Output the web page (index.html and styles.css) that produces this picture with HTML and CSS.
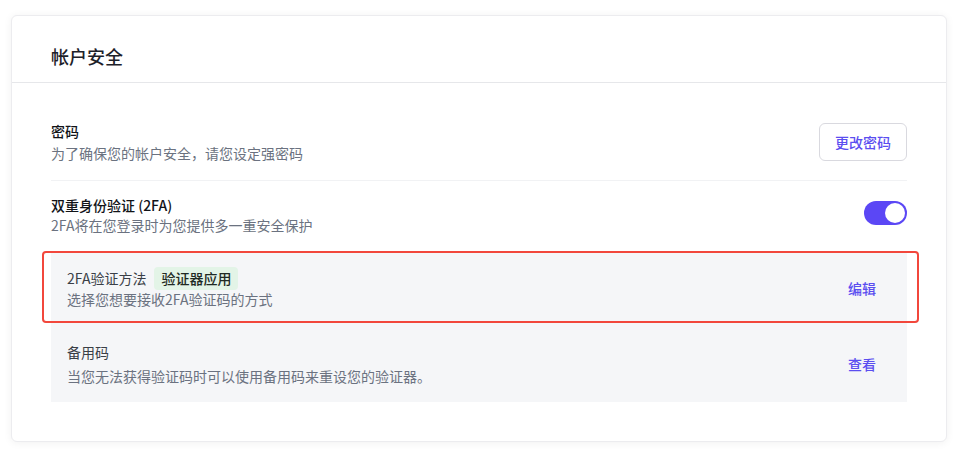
FILE: index.html
```html
<!DOCTYPE html>
<html lang="zh-CN">
<head>
<meta charset="utf-8">
<title>帐户安全</title>
<link rel="stylesheet" href="styles.css">
</head>
<body>
<div class="page">
  <section class="card">
    <header class="card-header">
      <h1 class="card-title">帐户安全</h1>
    </header>
    <div class="card-body">
      <div class="setting setting-first">
        <div class="setting-text">
          <div class="setting-label">密码</div>
          <div class="setting-desc setting-desc-spaced">为了确保您的帐户安全，请您设定强密码</div>
        </div>
        <button class="btn-outline" type="button">更改密码</button>
      </div>
      <div class="setting setting-second">
        <div class="setting-text">
          <div class="setting-label">双重身份验证 (2FA)</div>
          <div class="setting-desc">2FA将在您登录时为您提供多一重安全保护</div>
        </div>
        <span class="toggle" role="switch" aria-checked="true"><span class="toggle-knob"></span></span>
      </div>
      <div class="subsettings">
        <div class="subsetting subsetting-method">
          <div class="setting-text">
            <div class="sub-title-row">
              <span class="sub-label">2FA验证方法</span>
              <span class="badge">验证器应用</span>
            </div>
            <div class="setting-desc">选择您想要接收2FA验证码的方式</div>
          </div>
          <a class="link-action" href="#">编辑</a>
          <span class="highlight-box"></span>
        </div>
        <div class="subsetting subsetting-backup">
          <div class="setting-text">
            <div class="sub-label">备用码</div>
            <div class="setting-desc setting-desc-spaced">当您无法获得验证码时可以使用备用码来重设您的验证器。</div>
          </div>
          <a class="link-action" href="#">查看</a>
        </div>
      </div>
    </div>
  </section>
</div>
</body>
</html>
```
FILE: styles.css
```css
* { box-sizing: border-box; }
html, body { margin: 0; padding: 0; background: #ffffff; }
body {
  font-family: "Noto Sans CJK SC", "Noto Sans", sans-serif;
  font-size: 14px;
  color: #1f2937;
}
.page { padding: 15px 13px 19px 11px; }
.card {
  background: #fff;
  border: 1px solid #ececef;
  border-radius: 6px;
  box-shadow: 0 1px 8px rgba(0, 0, 0, 0.06);
}
.card-header {
  padding: 26px 39px 12px;
  border-bottom: 1px solid #e6e7ea;
}
.card-title {
  margin: 0;
  font-size: 18px;
  line-height: 28px;
  font-weight: 500;
  color: #1d2129;
}
.card-body { padding: 23px 39px 39px; }
.setting {
  display: flex;
  align-items: center;
  justify-content: space-between;
}
.setting-first { padding: 15px 0 17px; border-bottom: 1px solid #f1f2f4; }
.setting-second { padding: 14px 0 16px; }
.setting-label {
  font-size: 14px;
  line-height: 20px;
  font-weight: 500;
  color: #111318;
}
.setting-desc {
  font-size: 14px;
  line-height: 20px;
  color: #6b7280;
}
.setting-desc-spaced { margin-top: 2px; }
.subsetting-backup .setting-desc-spaced { margin-top: 4px; }
.btn-outline {
  width: 88px;
  height: 38px;
  border: 1px solid #d9d9df;
  border-radius: 6px;
  background: #fff;
  color: #5b4ef0;
  font-family: inherit;
  font-size: 14px;
  font-weight: 500;
  padding: 0;
}
.toggle {
  position: relative;
  display: inline-block;
  width: 43px;
  height: 24px;
  border-radius: 12px;
  background: #5b47f5;
  margin-bottom: 5px;
}
.toggle-knob {
  position: absolute;
  top: 2px;
  right: 2px;
  width: 20px;
  height: 20px;
  border-radius: 50%;
  background: #fff;
}
.subsettings { background: #f5f6f8; }
.subsetting {
  position: relative;
  display: flex;
  align-items: center;
  justify-content: space-between;
  padding: 16px 16px;
}
.subsetting-method { padding-bottom: 17px; }
.sub-title-row {
  display: flex;
  align-items: center;
  gap: 8px;
  height: 22px;
}
.sub-label {
  font-size: 14px;
  line-height: 20px;
  color: #3a3f47;
}
.badge {
  display: inline-flex;
  align-items: center;
  height: 23px;
  padding: 0 7px;
  border-radius: 4px;
  background: #e3f4e7;
  color: #1f2a24;
  font-weight: 500;
  line-height: 20px;
}
.link-action {
  margin-right: 15px;
  color: #5b4ef0;
  font-weight: 500;
  text-decoration: none;
  line-height: 20px;
}
.highlight-box {
  position: absolute;
  top: 0;
  left: -9px;
  right: -12px;
  height: 72px;
  border: 2px solid #f2473c;
  border-radius: 4px;
  pointer-events: none;
}
```
